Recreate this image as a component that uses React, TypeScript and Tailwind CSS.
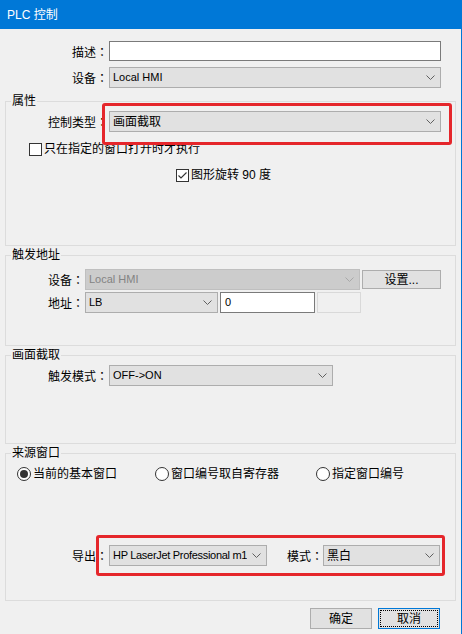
import type { ReactNode } from 'react';

const FONT = "font-['Liberation_Sans','Noto_Sans_CJK_SC',sans-serif]";

function Chevron({ disabled }: { disabled?: boolean }) {
  return (
    <svg width="9" height="5" viewBox="0 0 9 5" className="shrink-0">
      <path
        d="M0.5 0.5 L4.5 4.5 L8.5 0.5"
        fill="none"
        stroke={disabled ? '#a8a8a8' : '#606060'}
        strokeWidth="1"
      />
    </svg>
  );
}

function Combo({
  value,
  width,
  disabled,
  latin,
  tight,
}: {
  value: string;
  width: string;
  disabled?: boolean;
  latin?: boolean;
  tight?: boolean;
}) {
  return (
    <div
      className={`flex h-[21px] items-center justify-between border pl-[3px] pr-[5px] ${width} ${
        disabled
          ? 'border-[#bfbfbf] bg-[#cccccc] text-[#838383]'
          : 'border-[#adadad] bg-[#e1e1e1] text-black'
      }`}
    >
      <span
        className={`overflow-hidden whitespace-nowrap ${latin ? 'text-[11px]' : 'text-[12px]'} ${
          tight ? 'tracking-[-0.3px]' : ''
        }`}
      >
        {value}
      </span>
      <Chevron disabled={disabled} />
    </div>
  );
}

// fullwidth colon drawn centred in its cell, like the dialog font does
function Colon() {
  return <span className="font-['Noto_Sans_CJK_JP',sans-serif]">：</span>;
}

function Label({ text, width }: { text: string; width: string }) {
  return (
    <div className={`${width} h-[21px] shrink-0 overflow-visible whitespace-nowrap text-right text-[12px] leading-[21px]`}>
      {text}
      <Colon />
    </div>
  );
}

function Group({ title, height, children }: { title: string; height: string; children: ReactNode }) {
  return (
    <div className={`relative mx-[5px] border border-[#dcdcdc] ${height}`}>
      <span className="absolute left-[5px] top-[-9px] bg-[#f0f0f0] px-[1px] text-[12px] leading-[16px]">
        {title}
      </span>
      {children}
    </div>
  );
}

function Checkbox({ checked, label }: { checked?: boolean; label: string }) {
  return (
    <div className="flex h-[16px] items-center">
      <div className="flex h-[13px] w-[13px] items-center justify-center border border-[#333] bg-white">
        {checked && (
          <svg width="11" height="11" viewBox="0 0 11 11">
            <path d="M1.5 5.5 L4 8 L9.5 2.5" fill="none" stroke="#333" strokeWidth="1.1" />
          </svg>
        )}
      </div>
      <span className="ml-[2px] text-[12px]">{label}</span>
    </div>
  );
}

function Radio({ checked, label, width }: { checked?: boolean; label: string; width: string }) {
  return (
    <div className={`flex h-[16px] items-center ${width}`}>
      <div className="flex h-[14px] w-[14px] items-center justify-center rounded-full border border-[#333] bg-white">
        {checked && <div className="h-[8px] w-[8px] rounded-full bg-[#333]" />}
      </div>
      <span className="ml-[2px] text-[12px]">{label}</span>
    </div>
  );
}

export default function App() {
  return (
    <div className={`relative h-[634px] w-[462px] overflow-hidden border-r border-[#0078d7] bg-[#f0f0f0] text-black ${FONT}`}>
      <div className="flex h-[29px] items-center bg-[#0078d7] pl-[7px] text-[12px] text-white">PLC 控制</div>

      <div className="mt-[12px] flex h-[20px] items-center">
        <Label text="描述" width="w-[108px]" />
        <div className="ml-[1px] h-[20px] w-[332px] border border-[#7a7a7a] bg-white" />
      </div>
      <div className="mt-[6px] flex h-[21px] items-center">
        <Label text="设备" width="w-[108px]" />
        <div className="ml-[1px]">
          <Combo value="Local HMI" width="w-[332px]" latin />
        </div>
      </div>

      <div className="mt-[13px]">
        <Group title="属性" height="h-[145px]">
          <div className="flex h-[21px] items-center mt-[9px]">
            <Label text="控制类型" width="w-[102px]" />
            <div className="ml-[1px]">
              <Combo value="画面截取" width="w-[332px]" />
            </div>
          </div>
          <div className="mt-[9px] pl-[23px]">
            <Checkbox label="只在指定的窗口打开时才执行" />
          </div>
          <div className="mt-[10px] pl-[170px]">
            <Checkbox checked label="图形旋转 90 度" />
          </div>
        </Group>
      </div>

      <div className="mt-[9px]">
        <Group title="触发地址" height="h-[91px]">
          <div className="mt-[13px] flex h-[21px] items-center">
            <Label text="设备" width="w-[78px]" />
            <div className="ml-[1px]">
              <Combo value="Local HMI" width="w-[275px]" disabled latin />
            </div>
            <div className="ml-[2px] flex h-[19px] w-[79px] items-center justify-center border border-[#adadad] bg-[#e1e1e1] text-[12px]">
              设置...
            </div>
          </div>
          <div className="mt-[2px] flex h-[21px] items-center">
            <Label text="地址" width="w-[78px]" />
            <div className="ml-[1px]">
              <Combo value="LB" width="w-[133px]" latin />
            </div>
            <div className="ml-[2px] flex h-[21px] w-[95px] items-center border border-[#7a7a7a] bg-white pl-[4px] text-[11px]">
              0
            </div>
            <div className="ml-[2px] h-[21px] w-[44px] border border-[#d9d9d9] bg-[#f0f0f0]" />
          </div>
        </Group>
      </div>

      <div className="mt-[9px]">
        <Group title="画面截取" height="h-[89px]">
          <div className="mt-[9px] flex h-[21px] items-center">
            <Label text="触发模式" width="w-[102px]" />
            <div className="ml-[1px]">
              <Combo value="OFF->ON" width="w-[224px]" latin />
            </div>
          </div>
        </Group>
      </div>

      <div className="mt-[9px]">
        <Group title="来源窗口" height="h-[148px]">
          <div className="mt-[12px] flex items-center pl-[11px]">
            <Radio checked label="当前的基本窗口" width="w-[138px]" />
            <Radio label="窗口编号取自寄存器" width="w-[161px]" />
            <Radio label="指定窗口编号" width="w-[120px]" />
          </div>
          <div className="mt-[63px] flex h-[21px] items-center">
            <Label text="导出" width="w-[102px]" />
            <div className="ml-[1px]">
              <Combo value="HP LaserJet Professional m1" width="w-[158px]" latin tight />
            </div>
            <div className="ml-[20px] h-[21px] w-[36px] shrink-0 whitespace-nowrap text-[12px] leading-[21px]">
              模式
              <Colon />
            </div>
            <Combo value="黑白" width="w-[117px]" />
          </div>
        </Group>
      </div>

      <div className="mt-[7px] flex justify-end pr-[21px]">
        <div className="flex h-[21px] w-[62px] items-center justify-center border border-[#adadad] bg-[#e1e1e1] text-[12px]">
          确定
        </div>
        <div className="relative ml-[6px] flex h-[21px] w-[62px] items-center justify-center border border-[#0078d7] bg-[#e1e1e1] text-[12px]">
          <span className="pointer-events-none absolute inset-[1px] border border-dotted border-black" />
          取消
        </div>
      </div>

      {/* red annotation frames */}
      <div className="pointer-events-none absolute left-[102px] top-[103px] h-[42px] w-[350px] rounded-[3px] border-[3px] border-[#e5262b]" />
      <div className="pointer-events-none absolute left-[96px] top-[535px] h-[41px] w-[349px] rounded-[3px] border-[3px] border-[#e5262b]" />
    </div>
  );
}
